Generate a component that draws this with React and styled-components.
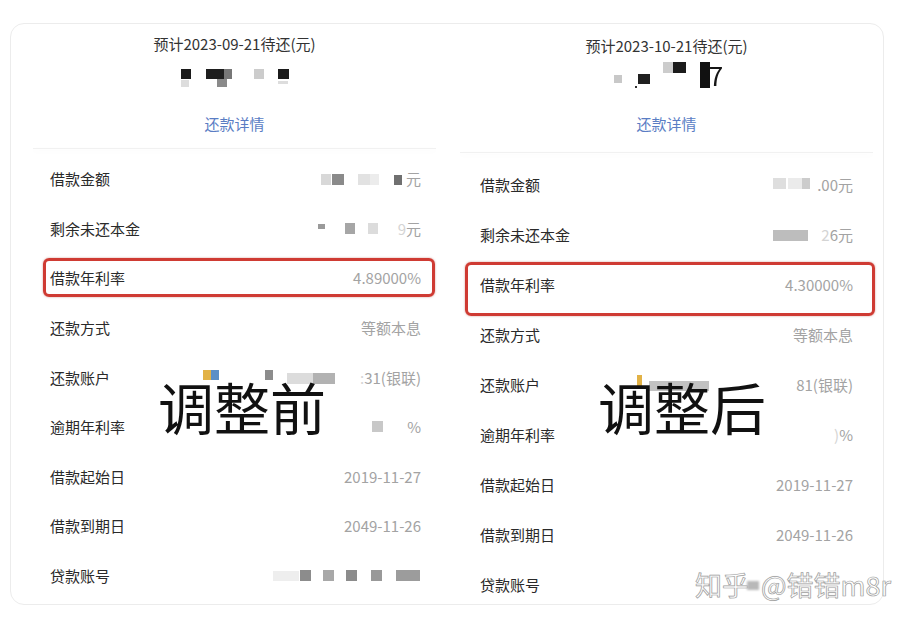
import React from "react";
import styled, { createGlobalStyle } from "styled-components";

const GlobalStyle = createGlobalStyle`
    html, body {
        margin: 0;
        padding: 0;
        background: #ffffff;
    }
    body {
        font-family: "Noto Sans CJK SC", "Noto Sans", sans-serif;
    }
`;

const Page = styled.div`
    position: relative;
    width: 910px;
    height: 622px;
    padding: 23px 0 0 10px;
    box-sizing: border-box;
    overflow: hidden;
    background: #fff;
`;

const Card = styled.div`
    width: 874px;
    height: 582px;
    box-sizing: border-box;
    border: 1px solid #ececec;
    border-radius: 14px;
    display: grid;
    grid-template-columns: 437px 1fr;
    overflow: hidden;
`;

const Panel = styled.div`
    position: relative;
    display: flex;
    flex-direction: column;
    padding: 0 ${(p) => p.$padRight}px 0 ${(p) => p.$padLeft}px;
`;

const Header = styled.div`
    height: ${(p) => p.$height}px;
    padding-top: ${(p) => p.$top}px;
    box-sizing: border-box;
    display: flex;
    flex-direction: column;
    align-items: center;
`;

const Title = styled.div`
    font-size: 15px;
    line-height: 20px;
    color: #333;
`;

const Amount = styled.div`
    height: ${(p) => p.$height}px;
    margin-top: ${(p) => p.$gap}px;
    display: flex;
    align-items: flex-end;
    filter: blur(0.4px);
`;

const Seven = styled.span`
    font-size: 26px;
    line-height: 26px;
    color: #151515;
    margin-left: -1px;
`;

const Link = styled.div`
    margin-top: ${(p) => p.$gap}px;
    font-size: 15px;
    line-height: 20px;
    color: #5a7dc4;
`;

const Divider = styled.div`
    height: 1px;
    margin-bottom: ${(p) => p.$gap}px;
    background: #f1f1f1;
    box-shadow: 0 2px 5px rgba(0, 0, 0, 0.05);
`;

const Row = styled.div`
    position: relative;
    height: ${(p) => p.$height}px;
    flex-shrink: 0;
    display: flex;
    align-items: center;
    justify-content: space-between;
    padding: 0 ${(p) => p.$padRight}px 0 ${(p) => p.$padLeft}px;

    &::after {
        content: "";
        display: ${(p) => (p.$box ? "block" : "none")};
        position: absolute;
        top: ${(p) => p.$box?.top ?? 0}px;
        bottom: ${(p) => p.$box?.bottom ?? 0}px;
        left: ${(p) => p.$box?.left ?? 0}px;
        right: ${(p) => p.$box?.right ?? 0}px;
        border: 3px solid #cf3b33;
        border-radius: 6px;
        box-shadow: 0 0 2px rgba(160, 40, 30, 0.5);
    }
`;

const Label = styled.span`
    font-size: 15px;
    color: #2a2a2a;
`;

const Value = styled.span`
    display: flex;
    align-items: center;
    font-size: 15px;
    color: #a3a3a3;
`;

const Faint = styled.span`
    color: #d4d4d4;
`;

const Stamp = styled.div`
    position: absolute;
    left: ${(p) => p.$left}px;
    top: ${(p) => p.$top}px;
    font-size: 56px;
    line-height: 56px;
    color: #111;
    white-space: nowrap;
`;

const Watermark = styled.div`
    position: absolute;
    left: 695px;
    top: 569px;
    font-size: 27px;
    line-height: 32px;
    color: #ffffff;
    -webkit-text-stroke: 0.7px #a0a0a0;
    text-shadow: 0 0 1px rgba(0, 0, 0, 0.2);
    white-space: nowrap;
    display: flex;
    align-items: center;
`;

const Smudge = styled.span`
    display: inline-block;
    width: 12px;
    height: 9px;
    margin: 0 2px 0 -2px;
    background: #b8b8b8;
    filter: blur(1px);
`;

function Mosaic({ w, h, rects, gap = 0 }) {
    return (
        <svg
            width={w}
            height={h}
            style={{ marginRight: gap, filter: "blur(0.6px)" }}
        >
            {rects.map(([x, y, rw, rh, c], i) => (
                <rect key={i} x={x} y={y} width={rw} height={rh} fill={c} />
            ))}
        </svg>
    );
}

const leftRows = [
    {
        label: "借款金额",
        value: (
            <>
                <Mosaic
                    w={83}
                    h={14}
                    gap={2}
                    rects={[
                        [0, 2, 10, 11, "#d8d8d8"],
                        [11, 2, 12, 11, "#8a8a8a"],
                        [37, 2, 12, 11, "#e2e2e2"],
                        [49, 2, 9, 11, "#ececec"],
                        [73, 3, 8, 10, "#707070"],
                    ]}
                />
                元
            </>
        ),
    },
    {
        label: "剩余未还本金",
        value: (
            <>
                <Mosaic
                    w={62}
                    h={14}
                    gap={18}
                    rects={[
                        [0, 3, 7, 5, "#9a9a9a"],
                        [27, 2, 10, 11, "#a6a6a6"],
                        [50, 2, 10, 11, "#dcdcdc"],
                    ]}
                />
                <Faint>9</Faint>元
            </>
        ),
    },
    { label: "借款年利率", value: "4.89000%", box: { top: 5, bottom: 6, left: 10, right: 1 } },
    { label: "还款方式", value: "等额本息" },
    {
        label: "还款账户",
        value: (
            <>
                <Mosaic
                    w={135}
                    h={16}
                    gap={22}
                    rects={[
                        [0, 1, 8, 10, "#e2b246"],
                        [8, 1, 8, 10, "#5c8fc6"],
                        [62, 1, 8, 10, "#8c8c8c"],
                        [84, 4, 26, 11, "#dcdcdc"],
                        [110, 4, 22, 11, "#b2b2b2"],
                    ]}
                />
                <Faint>:</Faint>31(银联)
            </>
        ),
    },
    {
        label: "逾期年利率",
        value: (
            <>
                <Mosaic w={12} h={14} gap={23} rects={[[0, 1, 11, 11, "#c8c8c8"]]} />%
            </>
        ),
    },
    { label: "借款起始日", value: "2019-11-27" },
    { label: "借款到期日", value: "2049-11-26" },
    {
        label: "贷款账号",
        value: (
            <Mosaic
                w={148}
                h={14}
                rects={[
                    [0, 2, 26, 10, "#eeeeee"],
                    [27, 1, 11, 11, "#8c8c8c"],
                    [50, 1, 11, 11, "#a8a8a8"],
                    [73, 1, 11, 11, "#8c8c8c"],
                    [98, 1, 11, 11, "#999999"],
                    [123, 1, 24, 11, "#9c9c9c"],
                ]}
            />
        ),
    },
];

const rightRows = [
    {
        label: "借款金额",
        value: (
            <>
                <Mosaic
                    w={38}
                    h={14}
                    gap={6}
                    rects={[
                        [0, 1, 13, 11, "#dedede"],
                        [15, 1, 14, 11, "#ebebeb"],
                        [29, 1, 8, 11, "#cccccc"],
                    ]}
                />
                .00元
            </>
        ),
    },
    {
        label: "剩余未还本金",
        value: (
            <>
                <Mosaic w={36} h={16} gap={12} rects={[[0, 4, 35, 11, "#bdbdbd"]]} />
                <Faint>2</Faint>6元
            </>
        ),
    },
    { label: "借款年利率", value: "4.30000%", box: { top: 3, bottom: -7, left: 5, right: -2 } },
    { label: "还款方式", value: "等额本息" },
    {
        label: "还款账户",
        value: (
            <>
                <Mosaic
                    w={75}
                    h={18}
                    gap={84}
                    rects={[
                        [0, 0, 5, 12, "#e2b246"],
                        [12, 6, 60, 10, "#c2c2c2"],
                    ]}
                />
                81(银联)
            </>
        ),
    },
    {
        label: "逾期年利率",
        value: (
            <>
                <Faint>)</Faint>%
            </>
        ),
    },
    { label: "借款起始日", value: "2019-11-27" },
    { label: "借款到期日", value: "2049-11-26" },
    { label: "贷款账号", value: "" },
];

function Statement({ side }) {
    const left = side === "left";
    const rows = left ? leftRows : rightRows;
    return (
        <Panel $padLeft={left ? 22 : 12} $padRight={left ? 12 : 10}>
            <Header $height={left ? 124 : 128} $top={left ? 10 : 12}>
                <Title>{left ? "预计2023-09-21待还(元)" : "预计2023-10-21待还(元)"}</Title>
                {left ? (
                    <Amount $height={22} $gap={13}>
                        <Mosaic
                            w={110}
                            h={22}
                            rects={[
                                [1, 2, 10, 10, "#1b1b1b"],
                                [1, 13, 8, 7, "#dddddd"],
                                [26, 2, 18, 10, "#1e1e1e"],
                                [44, 2, 8, 10, "#777777"],
                                [37, 12, 10, 8, "#8a8a8a"],
                                [74, 2, 10, 10, "#cccccc"],
                                [98, 2, 11, 10, "#1b1b1b"],
                                [98, 14, 10, 3, "#dddddd"],
                            ]}
                        />
                    </Amount>
                ) : (
                    <Amount $height={30} $gap={2}>
                        <Mosaic
                            w={100}
                            h={28}
                            rects={[
                                [4, 15, 8, 8, "#c8c8c8"],
                                [25, 26, 2, 2, "#333333"],
                                [28, 14, 12, 10, "#202020"],
                                [53, 2, 10, 11, "#cccccc"],
                                [63, 2, 13, 11, "#1b1b1b"],
                                [90, 2, 10, 26, "#111111"],
                            ]}
                        />
                        <Seven>7</Seven>
                    </Amount>
                )}
                <Link $gap={left ? 25 : 26}>还款详情</Link>
            </Header>
            <Divider $gap={left ? 5 : 6} />
            {rows.map((r) => (
                <Row
                    key={r.label}
                    $height={left ? 49.6 : 50}
                    $padLeft={left ? 17 : 20}
                    $padRight={left ? 15 : 20}
                    $box={r.box}
                >
                    <Label>{r.label}</Label>
                    <Value>{r.value}</Value>
                </Row>
            ))}
            <Stamp $left={left ? 147 : 150} $top={354}>
                {left ? "调整前" : "调整后"}
            </Stamp>
        </Panel>
    );
}

export default function App() {
    return (
        <>
            <GlobalStyle />
            <Page>
                <Card>
                    <Statement side="left" />
                    <Statement side="right" />
                </Card>
                <Watermark>
                    知乎
                    <Smudge />
                    @错错m8r
                </Watermark>
            </Page>
        </>
    );
}
